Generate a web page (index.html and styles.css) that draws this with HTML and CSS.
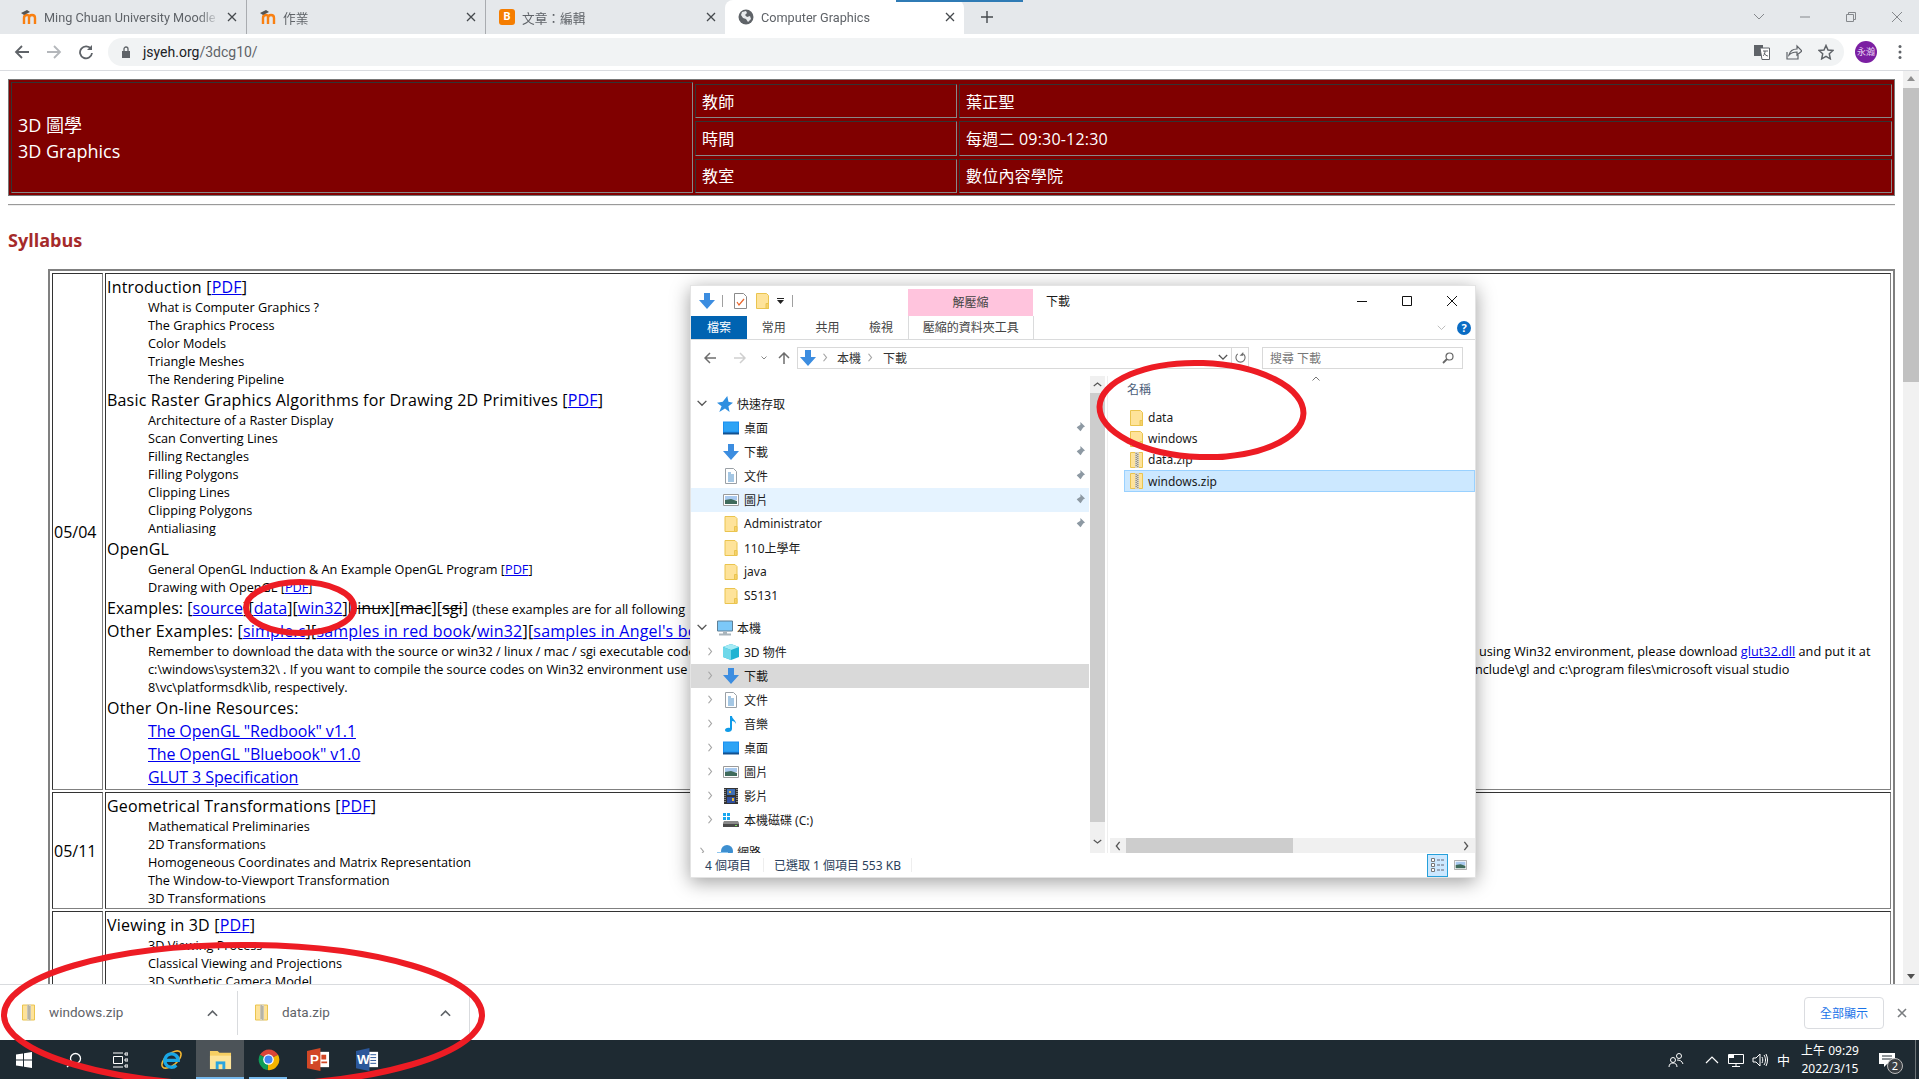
FILE: index.html
```html
<!DOCTYPE html>
<html lang="zh-Hant">
  <head>
    <meta charset="UTF-8" />
    <title>Computer Graphics</title>
    <link rel="stylesheet" href="styles.css">
  </head>
  <body>
    <svg class="sprite" width="0" height="0">
      <symbol id="i-down" viewBox="0 0 16 16"><path d="M5 0h6v7h5l-8 9-8-9h5z" fill="#3c8de0"/></symbol>
      <symbol id="i-folder" viewBox="0 0 13 16"><path d="M.5.5h10l2 2v13H.5z" fill="#fee39a" stroke="#eac44f"/><path d="M10 15.5v-5h2.5v5z" fill="#f6d26b" stroke="#eac44f"/></symbol>
      <symbol id="i-zip" viewBox="0 0 13 16"><path d="M.5.5h12v15H.5z" fill="#fee39a" stroke="#eac44f"/><path d="M5 0h4v16H5z" fill="#d8d4c4"/><path d="M6.2 1v14M7.8 2v13" stroke="#77756e" stroke-dasharray="1 1"/></symbol>
      <symbol id="i-desk" viewBox="0 0 16 13"><path d="M0 0h16v12H0z" fill="#1a8ff0"/><path d="M1 1h14v9H1z" fill="#2da3f5"/><path d="M0 11h16v2H0z" fill="#13518f"/></symbol>
      <symbol id="i-doc" viewBox="0 0 12 16"><path d="M.5.5h8l3 3v12H.5z" fill="#fff" stroke="#9aa0a6"/><path d="M3 5h3M3 7h6M3 9h6M3 11h6M3 13h6" stroke="#4a8fc9"/></symbol>
      <symbol id="i-pic" viewBox="0 0 16 12"><path d="M.5.5h15v11H.5z" fill="#fff" stroke="#9a9a9a"/><path d="M2 2h12v4H2z" fill="#a9c9ee"/><path d="M2 6l6-1 6 2v3H2z" fill="#3f6b5c"/></symbol>
      <symbol id="i-pin" viewBox="0 0 12 12"><path d="M7 0l5 5-2 1-2 3-1 1-2-2-4 4 4-4-2-2 1-1 3-2z" fill="#8d99a3"/></symbol>
      <symbol id="i-star" viewBox="0 0 14 14"><path d="M9 0l1 5 4 1-4 3 1 5-4-3-5 3 2-5-4-3 5-1z" fill="#2f8fe0"/></symbol>
      <symbol id="i-pc" viewBox="0 0 16 15"><path d="M.5.5h15v10H.5z" fill="#7cc8f8" stroke="#5f7f95"/><path d="M6 11h4v2H6zM2 13h12v2H2z" fill="#a9b4bb"/></symbol>
      <symbol id="i-cube" viewBox="0 0 16 16"><path d="M8 0l8 3v10l-8 3-8-3V3z" fill="#1fb3d2"/><path d="M0 3l8 3 8-3-8-3z" fill="#a5ebf5"/><path d="M0 3l8 3v10l-8-3z" fill="#6ed8ea"/></symbol>
      <symbol id="i-note" viewBox="0 0 12 16"><path d="M5 0h2c0 3 4 4 4 8-1-2-2-3-4-3v8c0 2-2 3-4 3s-3-1-3-2 2-3 5-2z" fill="#0f9be8"/></symbol>
      <symbol id="i-film" viewBox="0 0 14 16"><path d="M0 0h14v16H0z" fill="#333"/><path d="M3 1h8v6H3z" fill="#3f6fb5"/><path d="M3 9h8v6H3z" fill="#2f4f9f"/><path d="M5 3h2v2H5zM8 10h2v3H8z" fill="#e5b93c"/><path d="M1 1v14M13 1v14" stroke="#ddd" stroke-dasharray="1 1"/></symbol>
      <symbol id="i-drive" viewBox="0 0 16 14"><path d="M0 0h3v3H0zM4 0h3v3H4zM0 4h3v3H0zM4 4h3v3H4z" fill="#18a8f0"/><path d="M1 8h14l1 2v4H0v-4z" fill="#8a8a8a"/><path d="M0 11h16v3H0z" fill="#4a4a4a"/><path d="M12 12h2v1h-2z" fill="#7ce05a"/></symbol>
      <symbol id="i-net" viewBox="0 0 16 16"><circle cx="10" cy="7" r="6" fill="#3d8fd0"/><path d="M0 8h11v7H0z" fill="#8ec6ef"/></symbol>
      <symbol id="i-chev-r" viewBox="0 0 8 12"><path d="M2 1l4 5-4 5" fill="none" stroke="#a6a6a6" stroke-width="1.6"/></symbol>
      <symbol id="i-chev-d" viewBox="0 0 12 8"><path d="M1 1l5 5 5-5" fill="none" stroke="#555" stroke-width="1.6"/></symbol>
      <symbol id="i-chev-u" viewBox="0 0 12 8"><path d="M1 7l5-5 5 5" fill="none" stroke="#5f6368" stroke-width="1.8"/></symbol>
      <symbol id="i-x" viewBox="0 0 10 10"><path d="M1 1l8 8M9 1l-8 8" stroke="#45494d" stroke-width="1.3"/></symbol>
    </svg>

    <div class="tabstrip">
      <div class="tab">
        <svg class="fav" viewBox="0 0 16 16"><path d="M3 15V9c0-2 1-3 3-3s2 1 2 3v6M8 9c0-2 1-3 3-3s3 1 3 3v6" fill="none" stroke="#f98012" stroke-width="2.4"/><path d="M0 4l6-3 3 2-6 3z" fill="#555"/></svg>
        <span class="tab-title">Ming Chuan University Moodle</span>
        <svg class="tab-x"><use href="#i-x"/></svg>
      </div>
      <div class="tab">
        <svg class="fav" viewBox="0 0 16 16"><path d="M3 15V9c0-2 1-3 3-3s2 1 2 3v6M8 9c0-2 1-3 3-3s3 1 3 3v6" fill="none" stroke="#f98012" stroke-width="2.4"/><path d="M0 4l6-3 3 2-6 3z" fill="#555"/></svg>
        <span class="tab-title">作業</span>
        <svg class="tab-x"><use href="#i-x"/></svg>
      </div>
      <div class="tab">
        <span class="fav blogger">B</span>
        <span class="tab-title">文章：編輯</span>
        <svg class="tab-x"><use href="#i-x"/></svg>
      </div>
      <div class="tab tab-active">
        <svg class="fav" viewBox="0 0 16 16"><circle cx="8" cy="8" r="7.5" fill="#5f6368"/><path d="M4 3l4-1 1 2-2 2 2 2 3-1 1 3-3 3-2-3-3-1-2-3z" fill="#e8eaed"/></svg>
        <span class="tab-title">Computer Graphics</span>
        <svg class="tab-x"><use href="#i-x"/></svg>
      </div>
      <svg class="new-tab" viewBox="0 0 12 12"><path d="M6 0v12M0 6h12" stroke="#45494d" stroke-width="1.4"/></svg>
      <div class="win-ctrl">
        <svg viewBox="0 0 12 12"><path d="M1 3l5 5 5-5" fill="none" stroke="#85888c"/></svg>
        <svg viewBox="0 0 12 12"><path d="M1 6h10" stroke="#85888c"/></svg>
        <svg viewBox="0 0 12 12"><path d="M1.500 3.500h7v7h-7zM3.500 3.500v-2h7v7h-2" fill="none" stroke="#85888c"/></svg>
        <svg viewBox="0 0 12 12"><path d="M1 1l10 10M11 1L1 11" stroke="#85888c"/></svg>
      </div>
    </div>
    <div class="tab-blip"></div>

    <div class="toolbar">
      <svg class="tb-btn" viewBox="0 0 16 16"><path d="M15 8H2M8 2L2 8l6 6" fill="none" stroke="#5f6368" stroke-width="1.8"/></svg>
      <svg class="tb-btn" viewBox="0 0 16 16"><path d="M1 8h13M8 2l6 6-6 6" fill="none" stroke="#b4b7bb" stroke-width="1.8"/></svg>
      <svg class="tb-btn" viewBox="0 0 16 16"><path d="M13 5a6 6 0 1 0 1 4" fill="none" stroke="#5f6368" stroke-width="1.8"/><path d="M14 1v5H9z" fill="#5f6368"/></svg>
      <div class="omnibox">
        <svg class="lock" viewBox="0 0 10 12"><path d="M1 5h8v7H1z" fill="#5f6368"/><path d="M3 5V3a2 2 0 0 1 4 0v2" fill="none" stroke="#5f6368" stroke-width="1.3"/></svg>
        <span class="url">jsyeh.org<span class="url-path">/3dcg10/</span></span>
        <div class="omni-icons">
          <svg viewBox="0 0 16 16"><path d="M0 1h9v11H0z" fill="#5f6368"/><path d="M6 4h9.500v11.500H8z" fill="#fff" stroke="#5f6368"/><path d="M9 7h5M11 7c0 3-1 4-2 5M10 9c1 2 3 3 4 3" fill="none" stroke="#5f6368"/></svg>
          <svg viewBox="0 0 16 16"><path d="M1 8v7h11v-4M3 11c1-4 4-6 8-6V2l5 5-5 4V8c-3 0-6 1-8 3z" fill="none" stroke="#5f6368" stroke-width="1.200"/></svg>
          <svg viewBox="0 0 16 16"><path d="M8 1.500l2 4.500 5 .5-3.700 3.300 1 5L8 12.300 3.700 14.800l1-5L1 6.500 6 6z" fill="none" stroke="#5f6368" stroke-width="1.500"/></svg>
        </div>
      </div>
      <span class="avatar">永瀚</span>
      <svg class="kebab" viewBox="0 0 4 16"><circle cx="2" cy="2.500" r="1.500"/><circle cx="2" cy="8" r="1.500"/><circle cx="2" cy="13.500" r="1.500"/></svg>
    </div>

    <div class="viewport">
      <main class="page">
        <div class="head">
          <div class="head-title">3D 圖學<br />3D Graphics</div>
          <div class="head-info">
            <div class="info-cell">教師</div><div class="info-cell">葉正聖</div>
            <div class="info-cell">時間</div><div class="info-cell">每週二 09:30-12:30</div>
            <div class="info-cell">教室</div><div class="info-cell">數位內容學院</div>
          </div>
        </div>
        <hr class="rule" />
        <h2 class="syllabus-title">Syllabus</h2>

        <table class="syllabus">
          <tr>
            <td class="date">05/04</td>
            <td class="topics">
              <div class="big">Introduction [<a href="#">PDF</a>]</div>
              <div class="item">What is Computer Graphics ?</div>
              <div class="item">The Graphics Process</div>
              <div class="item">Color Models</div>
              <div class="item">Triangle Meshes</div>
              <div class="item">The Rendering Pipeline</div>
              <div class="big">Basic Raster Graphics Algorithms for Drawing 2D Primitives [<a href="#">PDF</a>]</div>
              <div class="item">Architecture of a Raster Display</div>
              <div class="item">Scan Converting Lines</div>
              <div class="item">Filling Rectangles</div>
              <div class="item">Filling Polygons</div>
              <div class="item">Clipping Lines</div>
              <div class="item">Clipping Polygons</div>
              <div class="item">Antialiasing</div>
              <div class="big">OpenGL</div>
              <div class="item">General OpenGL Induction &amp; An Example OpenGL Program [<a href="#">PDF</a>]</div>
              <div class="item">Drawing with OpenGL [<a href="#">PDF</a>]</div>
              <div class="big tight">Examples: [<a href="#">source</a>][<a href="#">data</a>][<a href="#">win32</a>][<s>linux</s>][<s>mac</s>][<s>sgi</s>] <small class="note">(these examples are for all following</small></div>
              <div class="big">Other Examples: [<a href="#">simple.c</a>][<a href="#">samples in red book</a>/<a href="#">win32</a>][<a href="#">samples in Angel's book</a>]</div>
              <div class="item split"><span class="split-left">Remember to download the data with the source or win32 / linux / mac / sgi executable codes.</span><span>using Win32 environment, please download <a href="#">glut32.dll</a> and put it at</span></div>
              <div class="item split"><span class="split-left short">c:\windows\system32\ . If you want to compile the source codes on Win32 environment use</span><span>nclude\gl and c:\program files\microsoft visual studio</span></div>
              <div class="item">8\vc\platformsdk\lib, respectively.</div>
              <div class="big">Other On-line Resources:</div>
              <div class="big indent"><a href="#">The OpenGL "Redbook" v1.1</a></div>
              <div class="big indent"><a href="#">The OpenGL "Bluebook" v1.0</a></div>
              <div class="big indent"><a href="#">GLUT 3 Specification</a></div>
            </td>
          </tr>
          <tr>
            <td class="date">05/11</td>
            <td class="topics">
              <div class="big">Geometrical Transformations [<a href="#">PDF</a>]</div>
              <div class="item">Mathematical Preliminaries</div>
              <div class="item">2D Transformations</div>
              <div class="item">Homogeneous Coordinates and Matrix Representation</div>
              <div class="item">The Window-to-Viewport Transformation</div>
              <div class="item">3D Transformations</div>
            </td>
          </tr>
          <tr>
            <td class="date"></td>
            <td class="topics">
              <div class="big">Viewing in 3D [<a href="#">PDF</a>]</div>
              <div class="item">3D Viewing Process</div>
              <div class="item">Classical Viewing and Projections</div>
              <div class="item">3D Synthetic Camera Model</div>
            </td>
          </tr>
        </table>
      </main>
      <div class="page-scroll">
        <span class="arrow-up"></span>
        <span class="page-thumb"></span>
        <span class="arrow-down"></span>
      </div>
    </div>

    <div class="downloads">
      <div class="dl-item first">
        <svg class="dl-icon"><use href="#i-zip"/></svg>
        <span class="dl-name">windows.zip</span>
        <svg class="dl-chev"><use href="#i-chev-u"/></svg>
      </div>
      <div class="dl-item second">
        <svg class="dl-icon"><use href="#i-zip"/></svg>
        <span class="dl-name">data.zip</span>
        <svg class="dl-chev"><use href="#i-chev-u"/></svg>
      </div>
      <button class="show-all">全部顯示</button>
      <svg class="dl-close" viewBox="0 0 10 10"><path d="M1 1l8 8M9 1l-8 8" stroke="#7a7d80" stroke-width="1.600"/></svg>
    </div>

    <div class="taskbar">
      <div class="task"><svg viewBox="0 0 16 16"><path d="M0 2.500l7-1v6H0zM8 1.300L16 0v7.500H8zM0 8.500h7v6l-7-1zM8 8.500h8V16l-8-1.300z" fill="#fff"/></svg></div>
      <div class="task search"><svg viewBox="0 0 16 16"><circle cx="9.500" cy="6.500" r="5" fill="none" stroke="#fff" stroke-width="1.300"/><path d="M6 10l-5 5" stroke="#fff" stroke-width="1.300"/></svg></div>
      <div class="task taskview"><svg viewBox="0 0 16 16"><path d="M1.500 4.500h9v7h-9zM1 1h10M1 15h10M13 1h3v2h-3zM13 7h3v2h-3zM13 13h3v2h-3z" fill="none" stroke="#fff"/></svg></div>
      <div class="task ie"><svg class="big-icon" viewBox="0 0 24 24"><ellipse cx="12" cy="12" rx="12" ry="6" transform="rotate(-40 12 12)" fill="none" stroke="#f2b632" stroke-width="1.600"/><path d="M6 13h13a7 7 0 1 0-2 5" fill="none" stroke="#19a7e6" stroke-width="3.400"/></svg></div>
      <div class="task task-on"><svg class="big-icon" viewBox="0 0 24 24"><path d="M1 3h8l2 2h12v17H1z" fill="#f6cf63"/><path d="M1 8h22v14H1z" fill="#fde49a"/><path d="M7 14h10v8H7z" fill="#2aa5e0"/><path d="M10 17h4v5h-4z" fill="#fde49a"/></svg></div>
      <div class="task task-open"><svg class="big-icon" viewBox="0 0 24 24"><path d="M12 12L3 7a11 11 0 0 1 19 0z" fill="#db4437"/><path d="M12 12l10-5a11 11 0 0 1-11 16z" fill="#f4b400"/><path d="M12 12l-1 11A11 11 0 0 1 3 7z" fill="#0f9d58"/><circle cx="12" cy="12" r="5.500" fill="#fff"/><circle cx="12" cy="12" r="4.200" fill="#4285f4"/></svg></div>
      <div class="task ppt"><svg class="big-icon" viewBox="0 0 24 24"><path d="M11 4h12v16H11z" fill="#fff"/><path d="M15 7h5v5h-5zM15 14h6v2h-6z" fill="#d24726"/><path d="M0 3l14-3v24L0 21z" fill="#d24726"/><text x="3" y="17" class="app-letter">P</text></svg></div>
      <div class="task word"><svg class="big-icon" viewBox="0 0 24 24"><path d="M11 4h12v16H11z" fill="#fff"/><path d="M15 7h6M15 10h6M15 13h6M15 16h6" stroke="#2b579a"/><path d="M0 3l14-3v24L0 21z" fill="#2b579a"/><text x="1" y="17" class="app-letter">W</text></svg></div>
      <div class="tray">
        <svg class="tray-people" viewBox="0 0 16 16"><circle cx="5" cy="8" r="2.500" fill="none" stroke="#fff"/><circle cx="11" cy="4" r="2.500" fill="none" stroke="#fff"/><path d="M1 15c0-3 2-4 4-4s4 1 4 4M9 8c3 0 5 1 6 4" fill="none" stroke="#fff"/></svg>
        <svg class="tray-icon" viewBox="0 0 16 16"><path d="M2 11l6-6 6 6" fill="none" stroke="#fff" stroke-width="1.200"/></svg>
        <svg class="tray-icon" viewBox="0 0 16 16"><path d="M.5 2.500h15v9H.5zM8 11.500v3M4 14.500h8" fill="none" stroke="#fff"/><path d="M1 2h5v4H1z" fill="#fff"/></svg>
        <svg class="tray-icon" viewBox="0 0 16 16"><path d="M1 6h3l4-4v12l-4-4H1zM10 5c1 2 1 4 0 6M12 3c2 3 2 7 0 10M14 2c2 4 2 8 0 12" fill="none" stroke="#fff"/></svg>
        <span class="tray-ime">中</span>
        <div class="clock">上午 09:29<br />2022/3/15</div>
        <div class="notify">
          <svg viewBox="0 0 16 16"><path d="M0 1h16v11H8l-3 3v-3H0z" fill="#fff"/><path d="M3 4h10M3 7h10" stroke="#1f2a33"/></svg>
          <span class="badge">2</span>
        </div>
        <span class="show-desktop"></span>
      </div>
    </div>

    <!-- explorer window sits on top of the browser -->
    <section class="explorer">
      <div class="ex-title">
        <svg class="qat-arrow"><use href="#i-down"/></svg>
        <span class="qat-sep"></span>
        <svg class="qat-doc" viewBox="0 0 13 16"><path d="M.5.500h9l3 3v12H.5z" fill="#fff" stroke="#8a8a8a"/><path d="M3 9l2 3 5-6" fill="none" stroke="#e8642a" stroke-width="1.200"/></svg>
        <svg class="qat-folder"><use href="#i-folder"/></svg>
        <svg class="qat-more" viewBox="0 0 7 6"><path d="M0 0h7v1H0zM0 2h7L3.500 6z" fill="#222"/></svg>
        <span class="qat-sep last"></span>
        <span class="pink-tab">解壓縮</span>
        <span class="ex-name">下載</span>
        <div class="caption">
          <svg viewBox="0 0 10 10"><path d="M0 5.500h10" stroke="#111"/></svg>
          <svg viewBox="0 0 10 10"><path d="M.5.500h9v9h-9z" fill="none" stroke="#111"/></svg>
          <svg viewBox="0 0 10 10"><path d="M0 0l10 10M10 0L0 10" stroke="#111"/></svg>
        </div>
      </div>

      <div class="ribbon">
        <span class="rb-file">檔案</span>
        <span class="rb-tab">常用</span>
        <span class="rb-tab">共用</span>
        <span class="rb-tab">檢視</span>
        <span class="rb-tool">壓縮的資料夾工具</span>
        <svg class="rb-chev" viewBox="0 0 12 8"><path d="M1 1l5 5 5-5" fill="none" stroke="#a8a8a8"/></svg>
        <span class="help">?</span>
      </div>

      <div class="ex-nav">
        <svg class="nav-btn" viewBox="0 0 12 12"><path d="M12 6H1M6 1L1 6l5 5" fill="none" stroke="#6d6d6d" stroke-width="1.500"/></svg>
        <svg class="nav-btn fwd" viewBox="0 0 12 12"><path d="M0 6h11M6 1l5 5-5 5" fill="none" stroke="#cfcfcf" stroke-width="1.500"/></svg>
        <svg class="nav-drop" viewBox="0 0 6 4"><path d="M.5.500L3 3 5.500.500" fill="none" stroke="#888"/></svg>
        <svg class="nav-btn up" viewBox="0 0 12 12"><path d="M6 12V1M1 6l5-5 5 5" fill="none" stroke="#6d6d6d" stroke-width="1.500"/></svg>
        <div class="address">
          <svg class="addr-icon"><use href="#i-down"/></svg>
          <svg class="addr-sep"><use href="#i-chev-r"/></svg>
          <span>本機</span>
          <svg class="addr-sep"><use href="#i-chev-r"/></svg>
          <span>下載</span>
          <svg class="addr-drop"><use href="#i-chev-d"/></svg>
        </div>
        <div class="refresh"><svg viewBox="0 0 12 12"><path d="M3 2a5 5 0 1 0 6 0" fill="none" stroke="#6d6d6d" stroke-width="1.200"/><path d="M9 0v4H5z" fill="#6d6d6d"/></svg></div>
        <div class="search-box">
          <span>搜尋 下載</span>
          <svg viewBox="0 0 12 12"><circle cx="7.500" cy="4.500" r="3.500" fill="none" stroke="#666" stroke-width="1.200"/><path d="M5 7l-4 4" stroke="#666" stroke-width="1.800"/></svg>
        </div>
      </div>

      <div class="ex-body">
        <div class="tree">
          <div class="row top"><svg class="exp open"><use href="#i-chev-d"/></svg><svg class="ico"><use href="#i-star"/></svg>快速存取</div>
          <div class="row sub"><span class="exp"></span><svg class="ico"><use href="#i-desk"/></svg>桌面<svg class="pin"><use href="#i-pin"/></svg></div>
          <div class="row sub"><span class="exp"></span><svg class="ico"><use href="#i-down"/></svg>下載<svg class="pin"><use href="#i-pin"/></svg></div>
          <div class="row sub"><span class="exp"></span><svg class="ico"><use href="#i-doc"/></svg>文件<svg class="pin"><use href="#i-pin"/></svg></div>
          <div class="row sub hover"><span class="exp"></span><svg class="ico"><use href="#i-pic"/></svg>圖片<svg class="pin"><use href="#i-pin"/></svg></div>
          <div class="row sub"><span class="exp"></span><svg class="ico"><use href="#i-folder"/></svg>Administrator<svg class="pin"><use href="#i-pin"/></svg></div>
          <div class="row sub"><span class="exp"></span><svg class="ico"><use href="#i-folder"/></svg>110上學年</div>
          <div class="row sub"><span class="exp"></span><svg class="ico"><use href="#i-folder"/></svg>java</div>
          <div class="row sub"><span class="exp"></span><svg class="ico"><use href="#i-folder"/></svg>S5131</div>
          <div class="row top group"><svg class="exp open"><use href="#i-chev-d"/></svg><svg class="ico"><use href="#i-pc"/></svg>本機</div>
          <div class="row sub"><svg class="exp"><use href="#i-chev-r"/></svg><svg class="ico"><use href="#i-cube"/></svg>3D 物件</div>
          <div class="row sub selected"><svg class="exp"><use href="#i-chev-r"/></svg><svg class="ico"><use href="#i-down"/></svg>下載</div>
          <div class="row sub"><svg class="exp"><use href="#i-chev-r"/></svg><svg class="ico"><use href="#i-doc"/></svg>文件</div>
          <div class="row sub"><svg class="exp"><use href="#i-chev-r"/></svg><svg class="ico"><use href="#i-note"/></svg>音樂</div>
          <div class="row sub"><svg class="exp"><use href="#i-chev-r"/></svg><svg class="ico"><use href="#i-desk"/></svg>桌面</div>
          <div class="row sub"><svg class="exp"><use href="#i-chev-r"/></svg><svg class="ico"><use href="#i-pic"/></svg>圖片</div>
          <div class="row sub"><svg class="exp"><use href="#i-chev-r"/></svg><svg class="ico"><use href="#i-film"/></svg>影片</div>
          <div class="row sub"><svg class="exp"><use href="#i-chev-r"/></svg><svg class="ico"><use href="#i-drive"/></svg>本機磁碟 (C:)</div>
          <div class="row top group"><svg class="exp"><use href="#i-chev-r"/></svg><svg class="ico"><use href="#i-net"/></svg>網路</div>
        </div>
        <div class="tree-scroll">
          <svg class="ts-btn" viewBox="0 0 12 8"><path d="M1 6l5-4 5 4" fill="none" stroke="#555" stroke-width="1.600"/></svg>
          <span class="ts-thumb"></span>
          <svg class="ts-btn" viewBox="0 0 12 8"><path d="M1 2l5 4 5-4" fill="none" stroke="#555" stroke-width="1.600"/></svg>
        </div>
        <div class="files">
          <div class="col-head">名稱<svg class="sort" viewBox="0 0 8 5"><path d="M.5 4.500L4 1l3.500 3.500" fill="none" stroke="#777"/></svg></div>
          <div class="file-list">
            <div class="file"><svg class="file-ico"><use href="#i-folder"/></svg>data</div>
            <div class="file"><svg class="file-ico"><use href="#i-folder"/></svg>windows</div>
            <div class="file"><svg class="file-ico"><use href="#i-zip"/></svg>data.zip</div>
            <div class="file file-on"><svg class="file-ico"><use href="#i-zip"/></svg>windows.zip</div>
          </div>
          <div class="hscroll">
            <svg class="hs-btn" viewBox="0 0 8 12"><path d="M6 1L2 6l4 5" fill="none" stroke="#555" stroke-width="1.600"/></svg>
            <span class="hs-thumb"></span>
            <svg class="hs-btn end" viewBox="0 0 8 12"><path d="M2 1l4 5-4 5" fill="none" stroke="#555" stroke-width="1.600"/></svg>
          </div>
        </div>
      </div>

      <div class="ex-status">
        <span class="st-count">4 個項目</span>
        <span class="st-sep"></span>
        <span class="st-sel">已選取 1 個項目</span>
        <span class="st-size">553 KB</span>
        <span class="st-sep"></span>
        <span class="view-btn"><svg viewBox="0 0 14 16"><path d="M.5 1.500h3v3h-3zM.5 6.500h3v3h-3zM.5 11.500h3v3h-3z" fill="#fff" stroke="#777"/><path d="M6 3h8M6 8h8M6 13h8" stroke="#667" stroke-dasharray="3 1"/></svg></span>
        <svg class="view-pic"><use href="#i-pic"/></svg>
      </div>
    </section>

    <svg class="marks" viewBox="0 0 1919 1079">
      <ellipse cx="300" cy="607.500" rx="54" ry="25.500"/>
      <ellipse cx="1201.500" cy="410" rx="102" ry="47" transform="rotate(2 1201.500 410)"/>
      <ellipse cx="243" cy="1015" rx="239" ry="70"/>
    </svg>
  </body>
</html>
```

FILE: styles.css
```css
* {
  box-sizing: border-box;
}
html,
body {
  margin: 0;
  height: 100%;
  overflow: hidden;
}
body {
  display: flex;
  flex-direction: column;
  position: relative;
  font-family: "Noto Sans", "Noto Sans CJK TC", sans-serif;
  background: #fff;
}
.sprite {
  position: absolute;
}

/* chrome tabs */
.tabstrip {
  display: flex;
  align-items: center;
  height: 34px;
  padding-left: 8px;
  background: #e5e8eb;
  font-family: Roboto, "Noto Sans CJK TC", sans-serif;
  font-size: 12.7px;
  color: #5f6368;
}
.tab {
  display: flex;
  align-items: center;
  gap: 7px;
  width: 239px;
  height: 100%;
  padding: 0 9px 0 13px;
  border-right: 1px solid #a9acb0;
  position: relative;
}
.tab:nth-child(3),
.tab-active {
  border-right: 0;
}
.tab-active {
  background: #fff;
  border-radius: 8px 8px 0 0;
}
.tab-title {
  flex: 1;
  white-space: nowrap;
  overflow: hidden;
  -webkit-mask-image: linear-gradient(90deg, #000 88%, transparent);
}
.fav {
  width: 16px;
  height: 16px;
  flex: none;
}
.blogger {
  background: #f57d00;
  border-radius: 3px;
  color: #fff;
  font: bold 11px/16px Roboto, sans-serif;
  text-align: center;
}
.tab-x {
  width: 10px;
  height: 10px;
  flex: none;
}
.new-tab {
  width: 12px;
  height: 12px;
  margin-left: 17px;
}
.win-ctrl {
  display: flex;
  gap: 34px;
  margin-left: auto;
  margin-right: 16px;
}
.win-ctrl svg {
  width: 12px;
  height: 12px;
}
.tab-blip {
  position: absolute;
  left: 896px;
  top: 0;
  width: 127px;
  height: 2px;
  background: #2f7bb5;
}

.toolbar {
  display: flex;
  align-items: center;
  height: 37px;
  padding: 0 0 1px 14px;
  background: #fff;
  border-bottom: 1px solid #dadce0;
}
.tb-btn {
  width: 16px;
  height: 16px;
  margin-right: 16px;
}
.omnibox {
  display: flex;
  align-items: center;
  width: 1736px;
  height: 28px;
  margin-left: -2px;
  padding-left: 13px;
  background: #f1f3f4;
  border-radius: 14px;
  font-family: Roboto, sans-serif;
  font-size: 14px;
}
.lock {
  width: 10px;
  height: 12px;
  margin-right: 12px;
}
.url {
  color: #202124;
}
.url-path {
  color: #5f6368;
}
.omni-icons {
  display: flex;
  gap: 16px;
  margin-left: auto;
  margin-right: 10px;
}
.omni-icons svg {
  width: 16px;
  height: 16px;
}
.avatar {
  width: 22px;
  height: 22px;
  margin-left: 11px;
  border-radius: 50%;
  background: #7b1fa2;
  color: #e4cdf0;
  font: 9px/22px "Noto Sans CJK TC", sans-serif;
  text-align: center;
}
.kebab {
  width: 4px;
  height: 16px;
  margin-left: 21px;
  fill: #5f6368;
}

/* page */
.viewport {
  display: flex;
  height: 913px;
  overflow: hidden;
}
.page {
  flex: 1;
  min-width: 0;
  padding: 8px;
  font-family: "Comic Sans MS", "Open Sans", "Noto Sans CJK TC", sans-serif;
  font-size: 16px;
  color: #000;
}
.head {
  display: flex;
  gap: 2px;
  height: 117px;
  padding: 2px;
  border: 1px solid #777;
  background: #800000;
  color: #fff;
  font-size: 16px;
}
.head-title {
  display: flex;
  flex-direction: column;
  justify-content: center;
  width: 682px;
  padding: 1px 0 0 6px;
  border: 1px solid;
  border-color: #333 #888 #888 #333;
  font-size: 18px;
  line-height: 26px;
}
.head-info {
  flex: 1;
  display: grid;
  grid-template-columns: 262px 1fr;
  grid-template-rows: repeat(3, 1fr);
  gap: 3px 2px;
  padding-top: 2px;
  letter-spacing: 0.2px;
}
.info-cell {
  display: flex;
  align-items: center;
  padding: 0 0 1px 6px;
  border: 1px solid;
  border-color: #333 #888 #888 #333;
}
.rule {
  height: 2px;
  margin: 8px 0 0;
  border: 0;
  border-top: 1px solid #9a9a9a;
  border-bottom: 1px solid #eee;
}
.syllabus-title {
  margin: 20px 0 15px;
  font-size: 18px;
  line-height: 28px;
  color: #a52a2a;
}
.syllabus {
  width: 1847px;
  margin-left: 40px;
  border: 2px solid #808080;
  border-spacing: 2px;
  table-layout: fixed;
}
.syllabus td {
  padding: 1px;
  border: 1px solid;
  border-color: #333 #808080 #808080 #333;
  vertical-align: top;
}
.syllabus .date {
  width: 51px;
  vertical-align: middle;
}
.big {
  height: 23px;
  padding-top: 1px;
  line-height: 23px;
  letter-spacing: 0.19px;
  white-space: nowrap;
  overflow: hidden;
}
.tight {
  letter-spacing: 0.05px;
}
.indent {
  padding-left: 41px;
  letter-spacing: -0.1px;
}
.item {
  height: 18px;
  padding-left: 41px;
  font-size: 12.7px;
  line-height: 18px;
  white-space: nowrap;
}
.note {
  font-size: 12.7px;
  letter-spacing: 0;
}
.split {
  display: flex;
}
.split-left {
  flex: none;
  width: 1331px;
  overflow: hidden;
}
.split-left.short {
  width: 1327px;
}
a {
  color: #0000ee;
}
s {
  text-decoration-thickness: 1px;
}
.page-scroll {
  display: flex;
  flex-direction: column;
  align-items: center;
  width: 16px;
  background: #f1f1f1;
}
.arrow-up {
  margin-top: 5px;
  border: 4px solid transparent;
  border-top: 0;
  border-bottom: 5px solid #8f8f8f;
}
.page-thumb {
  width: 16px;
  height: 294px;
  margin-top: 7px;
  background: #c1c1c1;
}
.arrow-down {
  margin-top: auto;
  margin-bottom: 5px;
  border: 4px solid transparent;
  border-bottom: 0;
  border-top: 5px solid #505050;
}

/* downloads */
.downloads {
  display: flex;
  align-items: center;
  height: 56px;
  background: #fff;
  border-top: 1px solid #d9dbde;
  font-family: Roboto, sans-serif;
  font-size: 13.5px;
  color: #5f6368;
}
.dl-item {
  display: flex;
  align-items: center;
  height: 44px;
  border-right: 1px solid #d9dbde;
}
.first {
  width: 238px;
  padding: 0 19px 0 22px;
}
.second {
  width: 232px;
  padding: 0 18px 0 17px;
}
.dl-icon {
  width: 13px;
  height: 17px;
  margin-right: 14px;
}
.dl-name {
  flex: 1;
  padding-bottom: 1px;
}
.dl-chev {
  width: 11px;
  height: 8px;
}
.show-all {
  width: 80px;
  height: 32px;
  margin-left: auto;
  background: #fff;
  border: 1px solid #dadce0;
  border-radius: 4px;
  color: #1a73e8;
  font: 12px "Noto Sans CJK TC", sans-serif;
}
.dl-close {
  width: 10px;
  height: 10px;
  margin: 0 12px 0 13px;
}

/* taskbar */
.taskbar {
  display: flex;
  align-items: center;
  height: 39px;
  background: #1e2a32;
  color: #fff;
}
.task {
  display: flex;
  align-items: center;
  justify-content: center;
  width: 48px;
  height: 100%;
}
.task svg {
  width: 16px;
  height: 16px;
}
.task .big-icon {
  width: 23px;
  height: 23px;
}
.search {
  margin-left: 2px;
}
.taskview {
  margin-left: -2px;
}
.ie {
  margin-left: 3px;
}
.task-on {
  margin-left: 1px;
  background: #4c5358;
  box-shadow: inset 0 -2px 0 #76b9ed;
}
.ppt {
  margin-left: 2px;
}
.word {
  margin-left: 1px;
}
.task-open {
  box-shadow: inset 0 -2px 0 0 #76b9ed;
  clip-path: inset(0 5px);
}
.app-letter {
  font: bold 14px "Liberation Sans", sans-serif;
  fill: #fff;
}
.tray {
  display: flex;
  align-items: center;
  height: 100%;
  margin-left: auto;
}
.tray-people {
  width: 16px;
  height: 16px;
  margin-right: 16px;
}
.tray-icon {
  width: 16px;
  height: 16px;
  margin: 0 4px;
}
.tray-ime {
  width: 23px;
  text-align: center;
  font: 13px "Noto Sans CJK TC", sans-serif;
}
.clock {
  width: 70px;
  text-align: center;
  font: 12px/18px "Noto Sans", "Noto Sans CJK TC", sans-serif;
}
.notify {
  display: flex;
  justify-content: center;
  width: 44px;
  position: relative;
}
.notify svg {
  width: 16px;
  height: 16px;
}
.badge {
  position: absolute;
  left: 22px;
  top: 6px;
  width: 16px;
  height: 16px;
  border: 1px solid #bbb;
  border-radius: 50%;
  background: #3a3f44;
  font-size: 11px;
  line-height: 14px;
  text-align: center;
}
.show-desktop {
  width: 4px;
  height: 100%;
  margin-left: 6px;
  border-left: 1px solid #6d7478;
}

/* explorer window */
.explorer {
  position: absolute;
  left: 690px;
  top: 285px;
  width: 786px;
  height: 593px;
  display: flex;
  flex-direction: column;
  background: #fff;
  border: 1px solid #e4e4e4;
  box-shadow: 0 4px 18px rgba(0, 0, 0, 0.38);
  font-size: 12px;
  color: #1a1a1a;
}
.ex-title {
  display: flex;
  align-items: center;
  height: 30px;
  flex: none;
  padding-left: 8px;
}
.qat-arrow {
  width: 16px;
  height: 16px;
}
.qat-sep {
  width: 1px;
  height: 12px;
  margin-left: 7px;
  background: #a0a0a0;
}
.qat-sep.last {
  margin-left: 8px;
}
.qat-doc {
  width: 13px;
  height: 16px;
  margin-left: 11px;
}
.qat-folder {
  width: 13px;
  height: 16px;
  margin-left: 9px;
}
.qat-more {
  width: 7px;
  height: 6px;
  margin-left: 8px;
}
.pink-tab {
  align-self: flex-end;
  width: 125px;
  height: 27px;
  margin-left: 115px;
  background: #ffc4dd;
  text-align: center;
  line-height: 28px;
  color: #444;
}
.ex-name {
  margin-left: 13px;
}
.caption {
  display: flex;
  gap: 35px;
  margin-left: auto;
  margin-right: 18px;
}
.caption svg {
  width: 10px;
  height: 10px;
}
.ribbon {
  display: flex;
  align-items: stretch;
  height: 24px;
  flex: none;
  border-bottom: 1px solid #dadbdc;
  line-height: 24px;
  color: #444;
}
.rb-file {
  width: 56px;
  background: #0063b1;
  color: #fff;
  text-align: center;
}
.rb-tab {
  width: 53.6px;
  text-align: center;
}
.rb-tool {
  width: 126px;
  border: 1px solid #dadbdc;
  border-width: 0 1px;
  text-align: center;
}
.rb-chev {
  width: 9px;
  height: 6px;
  align-self: center;
  margin-left: auto;
  margin-right: 11px;
}
.help {
  align-self: center;
  width: 14px;
  height: 14px;
  margin-right: 4px;
  border-radius: 50%;
  background: #0a6cc4;
  color: #fff;
  font: bold 11px/14px "Noto Sans", sans-serif;
  text-align: center;
}
.ex-nav {
  display: flex;
  align-items: center;
  height: 36px;
  flex: none;
  padding: 0 0 1px 13px;
}
.nav-btn {
  width: 12px;
  height: 12px;
}
.nav-btn.fwd {
  margin-left: 18px;
}
.nav-drop {
  width: 6px;
  height: 4px;
  margin-left: 15px;
}
.nav-btn.up {
  margin-left: 11px;
}
.address {
  display: flex;
  align-items: center;
  width: 435px;
  height: 22px;
  margin-left: 7px;
  padding-left: 2px;
  border: 1px solid #d9d9d9;
  color: #333;
}
.addr-icon {
  width: 16px;
  height: 16px;
}
.addr-sep {
  width: 6px;
  height: 9px;
  margin: 0 9px 0 6px;
}
.addr-sep + span + .addr-sep {
  margin-right: 10px;
}
.addr-drop {
  width: 10px;
  height: 7px;
  margin-left: auto;
  margin-right: 3px;
}
.refresh {
  display: flex;
  align-items: center;
  justify-content: center;
  width: 17px;
  height: 22px;
  border: 1px solid #d9d9d9;
  border-left: 0;
}
.refresh svg {
  width: 11px;
  height: 11px;
}
.search-box {
  display: flex;
  align-items: center;
  justify-content: space-between;
  width: 201px;
  height: 22px;
  margin-left: 13px;
  padding: 0 8px 0 7px;
  border: 1px solid #d9d9d9;
  color: #777;
}
.search-box svg {
  width: 12px;
  height: 12px;
}
.ex-body {
  flex: 1;
  display: flex;
  min-height: 0;
}
.tree {
  width: 398px;
  padding-top: 16px;
  overflow: hidden;
}
.row {
  display: flex;
  align-items: center;
  height: 24px;
  padding-bottom: 1px;
  white-space: nowrap;
}
.row.top {
  padding-left: 4px;
}
.row.sub {
  padding-left: 12px;
}
.group {
  margin-top: 8px;
}
.hover {
  background: #e5f3ff;
}
.selected {
  background: #d9d9d9;
}
.exp {
  flex: none;
  width: 14px;
  height: 9px;
}
.exp.open {
  height: 7px;
}
.ico {
  flex: none;
  width: 16px;
  height: 16px;
  margin-right: 5px;
}
.top .ico {
  margin-left: 8px;
  margin-right: 4px;
}
.sub .ico {
  margin-left: 6px;
}
.pin {
  width: 11px;
  height: 11px;
  margin-left: auto;
  margin-right: 4px;
}
.tree-scroll {
  display: flex;
  flex-direction: column;
  align-items: center;
  width: 15px;
  margin-left: 1px;
  background: #f0f0f0;
}
.ts-btn {
  flex: none;
  width: 9px;
  height: 17px;
}
.ts-thumb {
  width: 15px;
  height: 429px;
  background: #cdcdcd;
}
.tree-scroll .ts-btn:last-child {
  margin-top: auto;
  margin-bottom: 3px;
}
.files {
  flex: 1;
  display: flex;
  flex-direction: column;
  min-width: 0;
  margin-left: 2px;
  border-left: 1px solid #eee;
}
.col-head {
  height: 31px;
  padding: 4px 0 0 19px;
  color: #4c607a;
  position: relative;
}
.sort {
  position: absolute;
  left: 204px;
  top: 0;
  width: 8px;
  height: 5px;
}
.file-list {
  flex: 1;
}
.file {
  display: flex;
  align-items: center;
  height: 21px;
  margin-left: 16px;
  padding-left: 6px;
}
.file-on {
  height: 22px;
  background: #cce8ff;
  border: 1px solid #99d1ff;
  padding-left: 5px;
}
.file-ico {
  width: 13px;
  height: 16px;
  margin-right: 5px;
}
.hscroll {
  display: flex;
  align-items: center;
  height: 15px;
  margin-left: 2px;
  background: #f0f0f0;
}
.hs-btn {
  flex: none;
  width: 16px;
  height: 10px;
}
.hs-btn.end {
  margin-left: auto;
  margin-right: 1px;
}
.hs-thumb {
  width: 167px;
  height: 15px;
  background: #cdcdcd;
}
.ex-status {
  display: flex;
  align-items: center;
  height: 24px;
  flex: none;
  padding-left: 14px;
  color: #2b3f5c;
}
.st-sep {
  width: 1px;
  height: 14px;
  background: #eee;
}
.st-count {
  width: 58px;
}
.st-sel {
  margin-left: 10px;
  width: 88px;
}
.st-size {
  width: 49px;
}
.view-btn {
  display: flex;
  align-items: center;
  justify-content: center;
  width: 21px;
  height: 23px;
  margin-left: auto;
  margin-right: 6px;
  background: #cce8ff;
  border: 1px solid #26a0da;
}
.view-btn svg {
  width: 14px;
  height: 16px;
}
.view-pic {
  width: 13px;
  height: 10px;
  margin-right: 8px;
}

/* hand-drawn red marks over everything */
.marks {
  position: absolute;
  left: 0;
  top: 0;
  width: 1919px;
  height: 1079px;
  fill: none;
  stroke: #ed1c24;
  stroke-width: 6;
  pointer-events: none;
}
```
